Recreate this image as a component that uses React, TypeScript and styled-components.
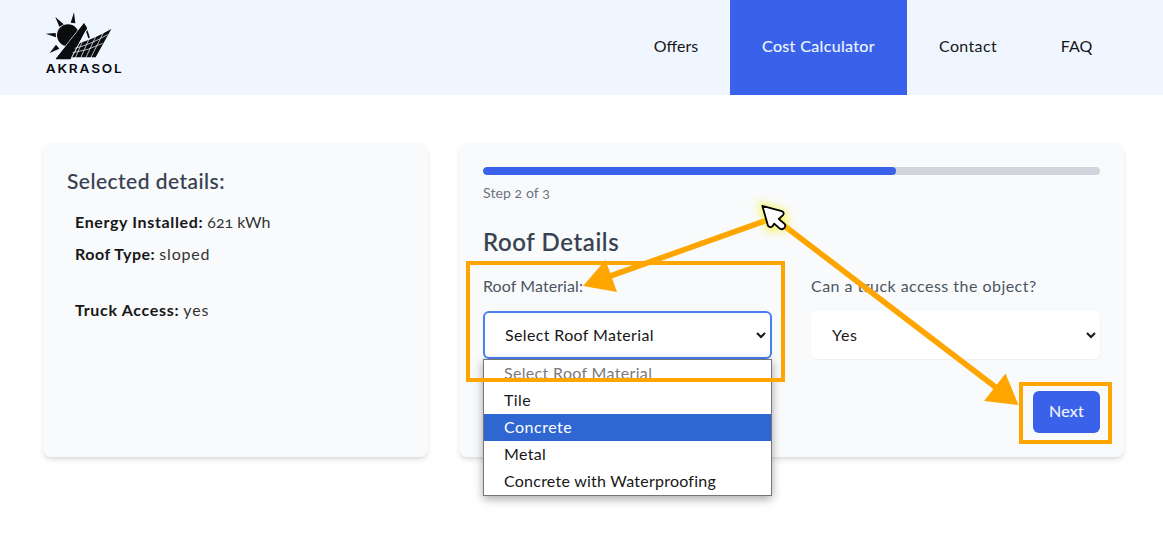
import React from 'react';
import styled, { createGlobalStyle } from 'styled-components';

const GlobalStyle = createGlobalStyle`
  *, *::before, *::after { box-sizing: border-box; }
  html, body { margin: 0; padding: 0; background: #fff; }
  body {
    font-family: Lato, "Open Sans", sans-serif;
    font-size: 16px;
    line-height: 24px;
    color: #171717;
    font-variant-numeric: oldstyle-nums;
    overflow: hidden;
  }
`;

const Page = styled.div`
  position: relative;
  width: 1163px;
  height: 544px;
  overflow: hidden;
`;

const Header = styled.header`
  display: flex;
  justify-content: space-between;
  height: 95px;
  padding: 0 39px 0 45px;
  background: #eff6ff;
`;

const Logo = styled.svg`
  width: 80px;
  height: 70px;
  margin-top: 10px;
`;

const Nav = styled.nav`
  display: flex;
`;

const NavItem = styled.a<{ $width: number; $active?: boolean; $spacing?: number }>`
  display: flex;
  align-items: center;
  justify-content: center;
  width: ${p => p.$width}px;
  padding-bottom: 4px;
  letter-spacing: ${p => p.$spacing ?? 0}px;
  color: ${p => (p.$active ? '#eff6ff' : '#171717')};
  background: ${p => (p.$active ? '#3a61e9' : 'transparent')};
  -webkit-text-stroke: ${p => (p.$active ? '0.15px #eff6ff' : '0')};
  text-decoration: none;
`;

const Main = styled.main`
  display: grid;
  grid-template-columns: 385px 665px;
  gap: 31px;
  padding: 48px 38px 0 43px;
`;

const Card = styled.section`
  height: 314px;
  padding: 24px;
  border-radius: 8px;
  background: #f9fafb;
  box-shadow: 0 4px 6px -1px rgba(0, 0, 0, 0.1), 0 2px 4px -2px rgba(0, 0, 0, 0.1);
`;

const SummaryTitle = styled.h2`
  margin: 0 0 16px;
  font-size: 21px;
  line-height: 27px;
  font-weight: 500;
  letter-spacing: 0.47px;
  color: #374151;
  -webkit-text-stroke: 0.12px #374151;
`;

const Detail = styled.p<{ $gap?: number }>`
  margin: 0 0 ${p => p.$gap ?? 8}px 8px;
`;

const DetailName = styled.strong<{ $spacing: number }>`
  font-weight: 700;
  letter-spacing: ${p => p.$spacing}px;
`;

const DetailValue = styled.span<{ $spacing?: number }>`
  letter-spacing: ${p => p.$spacing ?? 0}px;
  color: #333;
`;

const ProgressTrack = styled.div`
  height: 8px;
  border-radius: 4px;
  background: #d1d5db;
  overflow: hidden;
`;

const ProgressFill = styled.div`
  width: 67%;
  height: 100%;
  border-radius: 4px;
  background: #3a61e9;
`;

const StepLabel = styled.p`
  margin: 8px 0 23px;
  font-size: 14px;
  line-height: 20px;
  letter-spacing: 0.1px;
  color: #6b7280;
`;

const FormTitle = styled.h1`
  margin: 0 0 16px;
  font-size: 24px;
  line-height: 32px;
  font-weight: 500;
  letter-spacing: 0.62px;
  color: #374151;
  -webkit-text-stroke: 0.2px #374151;
`;

const Fields = styled.div`
  display: grid;
  grid-template-columns: 289px 289px;
  justify-content: space-between;
`;

const Field = styled.div`
  position: relative;
`;

const Label = styled.label<{ $spacing: number }>`
  display: block;
  margin-bottom: 13px;
  letter-spacing: ${p => p.$spacing}px;
  color: #4b5563;
`;

const Select = styled.select<{ $open?: boolean; $spacing: number }>`
  display: block;
  width: 100%;
  height: 48px;
  padding: 0 0 2px ${p => (p.$open ? 18 : 17)}px;
  border: 0 solid #fff;
  border-right-width: ${p => (p.$open ? 3 : 1)}px;
  border-radius: 6px;
  background-color: #fff;
  color: #171717;
  font: inherit;
  letter-spacing: ${p => p.$spacing}px;
  outline: ${p => (p.$open ? '2px solid #4a7ff0' : 'none')};
  outline-offset: -2px;
  box-shadow: 0 1px 2px rgba(0, 0, 0, 0.05);
`;

const OptionList = styled.ul`
  position: absolute;
  top: 85px;
  left: 0;
  width: 289px;
  margin: 0;
  padding: 0;
  list-style: none;
  border: 1px solid #767676;
  background: #fff;
  box-shadow: 0 3px 9px rgba(0, 0, 0, 0.35);
`;

const Option = styled.li<{ $spacing: number; $state?: 'muted' | 'active' }>`
  height: 27px;
  padding-left: 20px;
  line-height: 25px;
  letter-spacing: ${p => p.$spacing}px;
  color: ${p => (p.$state === 'active' ? '#fff' : p.$state === 'muted' ? '#7a7a7a' : '#171717')};
  background: ${p => (p.$state === 'active' ? '#2f66d2' : 'transparent')};
`;

const Actions = styled.div`
  display: flex;
  justify-content: flex-end;
  margin-top: 32px;
`;

const NextButton = styled.button`
  width: 67px;
  height: 42px;
  padding: 0 0 2px;
  border: 0;
  border-radius: 6px;
  background: #3a61e9;
  color: #eff6ff;
  font: inherit;
  letter-spacing: 0.3px;
  -webkit-text-stroke: 0.15px #eff6ff;
`;

const Annotations = styled.svg`
  position: absolute;
  inset: 0;
  width: 1163px;
  height: 544px;
  pointer-events: none;
`;

const AkrasolLogo = () => (
  <Logo viewBox="45 30 240 210">
    <g fill="#0b0c0e">
      <path d="M132 37 L122 68 L136 70 Z" />
      <path d="M76 51 L88 80 L101 73 Z" />
      <path d="M47 101 L77 99 L78 112 Z" />
      <path d="M59 159 L78 134 L88 146 Z" />
      <circle cx="114" cy="106" r="33" />
      <path
        d="M162 70 L171 84 L121 178 L77 178 Z"
        stroke="#eff6ff"
        strokeWidth="5"
        paintOrder="stroke"
      />
      <path d="M171 84 L160 124 L121 178 Z" fill="#eff6ff" />
      <path d="M162 70 L171 84 L121 177 L77 177 Z" />
      <path d="M244 87 L197 172 L119 172 L138 133 Q190 118 244 87 Z" />
    </g>
    <path d="M161 76 Q171 90 177 114" fill="none" stroke="#0b0c0e" strokeWidth="5" />
    <g fill="none" stroke="#eff6ff" strokeWidth="2.200">
      <path d="M171 88 L125 172" strokeWidth="3" />
      <path d="M134 145 Q180 134 233 104" />
      <path d="M128 158 Q174 152 218 130" />
      <path d="M157 124 L136 174" />
      <path d="M177 117 L152 174" />
      <path d="M198 108 L167 174" />
      <path d="M220 98 L182 174" />
    </g>
    <text
      x="47"
      y="220"
      fontFamily="Inter, sans-serif"
      fontSize="37"
      fontWeight="600"
      letterSpacing="5"
      fill="#0b0c0e"
      textLength="234"
      lengthAdjust="spacingAndGlyphs"
    >
      AKRASOL
    </text>
  </Logo>
);

const Guides = () => (
  <Annotations viewBox="0 0 1163 544">
    <defs>
      <filter id="glow" x="-100%" y="-100%" width="300%" height="300%">
        <feGaussianBlur stdDeviation="4" />
      </filter>
    </defs>
    <g fill="none" stroke="#ffa500">
      <rect x="468" y="263" width="315" height="117" strokeWidth="4" />
      <rect x="1021" y="384" width="89" height="58" strokeWidth="4" />
      <path d="M773 218 L609 276.500" strokeWidth="5.600" />
      <path d="M778 221 L998 389" strokeWidth="5.600" />
    </g>
    <g fill="#ffa500">
      <path d="M583 286 L605.500 260 L617 292 Z" />
      <path d="M1018.500 405 L1005.500 373.500 L984 401 Z" />
    </g>
    <path
      d="M762 206 L783 213 L785 227 L769 228 Z"
      fill="#f5f200"
      stroke="#f5f200"
      strokeWidth="6"
      opacity="0.6"
      filter="url(#glow)"
    />
    <path
      d="M762.300 205.800 L781.800 211.200 Q784.800 212.500 783 215.200 L778.800 219 L784.300 223.600 Q786.500 226 784 228.300 Q781.500 230.300 779.200 228.200 L774.200 223.700 L772.500 226.300 Q770 228.300 768 225.700 Z"
      fill="#fff"
      stroke="#000"
      strokeWidth="1.800"
      strokeLinejoin="round"
    />
  </Annotations>
);

export default function App() {
  return (
    <Page>
      <GlobalStyle />
      <Header>
        <AkrasolLogo />
        <Nav>
          <NavItem $width={108}>Offers</NavItem>
          <NavItem $width={177} $active $spacing={0.36}>Cost Calculator</NavItem>
          <NavItem $width={122} $spacing={0.36}>Contact</NavItem>
          <NavItem $width={95}>FAQ</NavItem>
        </Nav>
      </Header>
      <Main>
        <Card>
          <SummaryTitle>Selected details:</SummaryTitle>
          <Detail>
            <DetailName $spacing={0.64}>Energy Installed:</DetailName>{' '}
            <DetailValue>621 kWh</DetailValue>
          </Detail>
          <Detail $gap={32}>
            <DetailName $spacing={0.5}>Roof Type:</DetailName>{' '}
            <DetailValue $spacing={0.8}>sloped</DetailValue>
          </Detail>
          <Detail>
            <DetailName $spacing={0.68}>Truck Access:</DetailName>{' '}
            <DetailValue $spacing={0.8}>yes</DetailValue>
          </Detail>
        </Card>
        <Card>
          <ProgressTrack>
            <ProgressFill />
          </ProgressTrack>
          <StepLabel>Step 2 of 3</StepLabel>
          <FormTitle>Roof Details</FormTitle>
          <Fields>
            <Field>
              <Label $spacing={0.08}>Roof Material:</Label>
              <Select $open $spacing={0.36}>
                <option>Select Roof Material</option>
              </Select>
              <OptionList>
                <Option $state="muted" $spacing={0.33}>Select Roof Material</Option>
                <Option $spacing={0.4}>Tile</Option>
                <Option $state="active" $spacing={0.5}>Concrete</Option>
                <Option $spacing={0.35}>Metal</Option>
                <Option $spacing={0.24}>Concrete with Waterproofing</Option>
              </OptionList>
            </Field>
            <Field>
              <Label $spacing={0.47}>Can a truck access the object?</Label>
              <Select $spacing={0.7}>
                <option>Yes</option>
              </Select>
            </Field>
          </Fields>
          <Actions>
            <NextButton>Next</NextButton>
          </Actions>
        </Card>
      </Main>
      <Guides />
    </Page>
  );
}
